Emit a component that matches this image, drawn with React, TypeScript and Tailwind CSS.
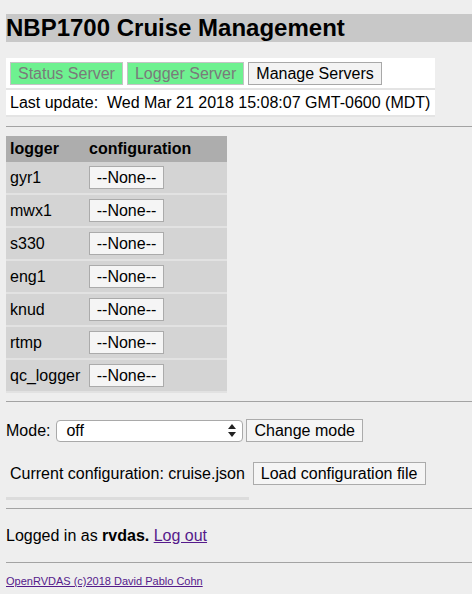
const loggers = ['gyr1', 'mwx1', 's330', 'eng1', 'knud', 'rtmp', 'qc_logger'];

function ServerButton({ label, active }: { label: string; active?: boolean }) {
  return (
    <div
      className={
        active
          ? 'h-[23px] px-[7px] flex items-center whitespace-nowrap bg-[#6ef190] border border-[#c4c4c4] text-[#7a7a7a]'
          : 'h-[23px] px-[7px] flex items-center whitespace-nowrap bg-[#f3f3f3] border border-[#a8a8a8] text-black'
      }
    >
      {label}
    </div>
  );
}

function PlainButton({ label, className = '' }: { label: string; className?: string }) {
  return (
    <div
      className={`h-[23px] px-[7px] flex items-center whitespace-nowrap bg-[#f5f5f5] border border-[#ababab] text-black ${className}`}
    >
      {label}
    </div>
  );
}

function Rule() {
  return <div className="h-px bg-[#a3a3a3]" />;
}

export default function App() {
  return (
    <div className="min-h-screen bg-[#eeeeee] pl-[6px] pt-[14px] text-[16px] leading-[18px] text-black font-['Liberation_Sans',Arial,sans-serif]">
      <div className="h-[28px] bg-[#c8c8c8] flex items-center text-[24px] font-bold whitespace-nowrap">
        NBP1700 Cruise Management
      </div>

      {/* server status box */}
      <div className="mt-[16px] inline-block bg-white">
        <div className="flex gap-[4px] px-[4px] pt-[4px] pb-[3px]">
          <ServerButton label="Status Server" active />
          <ServerButton label="Logger Server" active />
          <ServerButton label="Manage Servers" />
        </div>
        <div className="border-t-2 border-b-2 border-[#e4e4e4] h-[29px] flex items-center pl-[4px] pr-[5px] whitespace-pre">
          Last update:  Wed Mar 21 2018 15:08:07 GMT-0600 (MDT)
        </div>
      </div>

      <div className="mt-[9px]">
        <Rule />
      </div>

      {/* logger configuration table */}
      <div className="mt-[9px] w-[221px]">
        <div className="h-[26px] bg-[#adadad] flex items-center font-bold">
          <div className="w-[83px] pl-[4px]">logger</div>
          <div>configuration</div>
        </div>
        {loggers.map((name) => (
          <div
            key={name}
            className="h-[33px] bg-[#d4d4d4] border-b-2 border-[#e2e2e2] flex items-center"
          >
            <div className="w-[83px] pl-[4px]">{name}</div>
            <PlainButton label="--None--" className="w-[75px] justify-center px-0" />
          </div>
        ))}
      </div>

      <div className="mt-[8px]">
        <Rule />
      </div>

      {/* mode selector */}
      <div className="mt-[17px] flex items-center h-[23px]">
        <span>Mode:</span>
        <div className="ml-[6px] w-[187px] h-[22px] bg-white border border-[#a9a9a9] rounded-[4px] flex items-center justify-between pl-[9px] pr-[6px]">
          <span>off</span>
          <svg width="8" height="13" viewBox="0 0 8 13">
            <path d="M4 0 L8 5 L0 5 Z" fill="#222" />
            <path d="M0 8 L8 8 L4 13 Z" fill="#222" />
          </svg>
        </div>
        <PlainButton label="Change mode" className="ml-[3px] w-[117px]" />
      </div>

      <div className="mt-[20px] flex items-center h-[23px] pl-[4px]">
        <span>Current configuration: cruise.json</span>
        <PlainButton label="Load configuration file" className="ml-[8px] w-[173px]" />
      </div>

      <div className="mt-[12px] w-[243px] h-[3px] bg-[#dcdcdc]" />

      <div className="mt-[8px]">
        <Rule />
      </div>

      <div className="mt-[18px] h-[18px]">
        Logged in as <b>rvdas.</b>{' '}
        <a href="#" className="text-[#551a8b] underline">
          Log out
        </a>
      </div>

      <div className="mt-[17px]">
        <Rule />
      </div>

      <div className="mt-[12px] text-[11px] leading-[13px]">
        <a href="#" className="text-[#551a8b] underline">
          OpenRVDAS (c)2018 David Pablo Cohn
        </a>
      </div>
    </div>
  );
}
